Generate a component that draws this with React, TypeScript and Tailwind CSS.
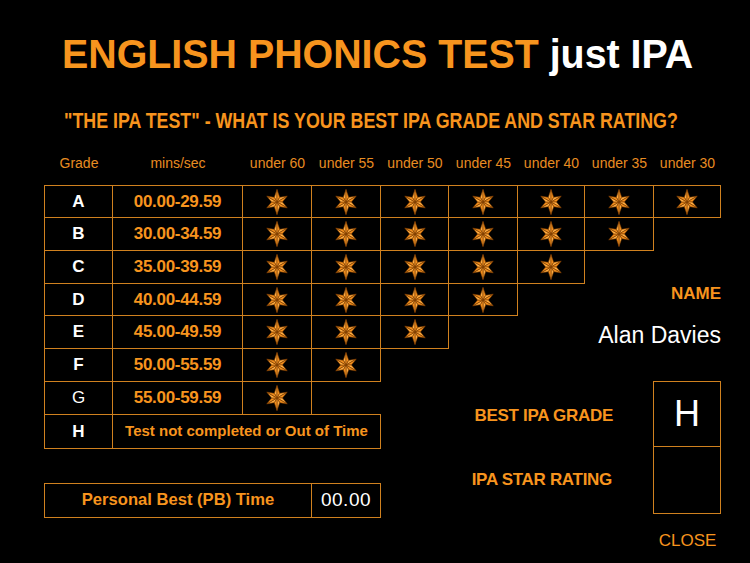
import React from "react";

const ORANGE = "text-[#f7941e]";

function Star() {
  const cx = 13;
  const cy = 13;
  const R = 12.5;
  const r = 5.4;
  const pt = (ang: number, rad: number) => {
    const a = (ang * Math.PI) / 180;
    return [cx + rad * Math.cos(a), cy + rad * Math.sin(a)];
  };
  const tris: React.ReactNode[] = [];
  for (let i = 0; i < 6; i++) {
    const a = -90 + i * 60;
    const P = pt(a, i % 3 === 0 ? R : R - 0.8);
    const L = pt(a - 30, r);
    const Rt = pt(a + 30, r);
    tris.push(
      <polygon
        key={"l" + i}
        points={`${cx},${cy} ${L[0]},${L[1]} ${P[0]},${P[1]}`}
        fill="#ffad42"
        stroke="#7a3a00"
        strokeWidth="0.6"
        strokeLinejoin="round"
      />
    );
    tris.push(
      <polygon
        key={"r" + i}
        points={`${cx},${cy} ${P[0]},${P[1]} ${Rt[0]},${Rt[1]}`}
        fill="#f2901f"
        stroke="#7a3a00"
        strokeWidth="0.6"
        strokeLinejoin="round"
      />
    );
  }
  return (
    <svg width="26" height="26" viewBox="0 0 26 26">
      {tris}
    </svg>
  );
}

const colStart = [
  "col-start-1",
  "col-start-2",
  "col-start-3",
  "col-start-4",
  "col-start-5",
  "col-start-6",
  "col-start-7",
  "col-start-8",
  "col-start-9",
];
const rowStart = [
  "row-start-1",
  "row-start-2",
  "row-start-3",
  "row-start-4",
  "row-start-5",
  "row-start-6",
  "row-start-7",
  "row-start-8",
  "row-start-9",
  "row-start-10",
  "row-start-11",
  "row-start-12",
];

const cell = "-ml-px -mt-px border border-[#d0811f] flex items-center justify-center";

const grades = [
  { g: "A", t: "00.00-29.59", n: 7, bold: true },
  { g: "B", t: "30.00-34.59", n: 6, bold: true },
  { g: "C", t: "35.00-39.59", n: 5, bold: true },
  { g: "D", t: "40.00-44.59", n: 4, bold: true },
  { g: "E", t: "45.00-49.59", n: 3, bold: true },
  { g: "F", t: "50.00-55.59", n: 2, bold: true },
  { g: "G", t: "55.00-59.59", n: 1, bold: false },
];

const headers = ["Grade", "mins/sec", "under 60", "under 55", "under 50", "under 45", "under 40", "under 35", "under 30"];

export default function App() {
  return (
    <div className="w-[750px] h-[563px] bg-black overflow-hidden flex flex-col font-[family-name:'Liberation_Sans',Arial,sans-serif]">
      <div className="mt-[32px] h-[44px] pl-[62px] whitespace-nowrap">
        <span className="inline-block origin-left scale-x-[0.96] text-[41px] leading-[44px] font-bold">
          <span className={ORANGE}>ENGLISH PHONICS TEST</span>
          <span className="text-white"> just IPA</span>
        </span>
      </div>
      <div className="mt-[33px] h-[24px] pl-[64px] whitespace-nowrap">
        <span
          className={`inline-block origin-left scale-x-[0.81] text-[22px] leading-[24px] font-bold ${ORANGE}`}
        >
          "THE IPA TEST" - WHAT IS YOUR BEST IPA GRADE AND STAR RATING?
        </span>
      </div>

      <div className="mt-[20px] ml-[45px] grid grid-cols-[68px_130px_69px_69px_68px_69px_67px_69px_67px] grid-rows-[33px_32px_33px_33px_32px_33px_33px_33px_34px_35px_34px_45px]">
        {headers.map((h, i) => (
          <div
            key={h}
            className={`${colStart[i]} row-start-1 self-start text-center text-[14px] leading-[20px] text-[#e88c22] whitespace-nowrap`}
          >
            {h}
          </div>
        ))}

        {grades.map((row, ri) => (
          <React.Fragment key={row.g}>
            <div
              className={`${cell} col-start-1 ${rowStart[ri + 1]} text-white text-[17px] ${row.bold ? "font-bold" : "font-normal"}`}
            >
              {row.g}
            </div>
            <div className={`${cell} col-start-2 ${rowStart[ri + 1]} ${ORANGE} text-[17px] font-bold tracking-[-0.3px]`}>
              {row.t}
            </div>
            {Array.from({ length: row.n }).map((_, si) => (
              <div key={si} className={`${cell} ${colStart[si + 2]} ${rowStart[ri + 1]}`}>
                <Star />
              </div>
            ))}
          </React.Fragment>
        ))}

        <div className={`${cell} col-start-1 row-start-9 text-white text-[17px] font-bold`}>H</div>
        <div className={`${cell} col-start-2 col-end-5 row-start-9 ${ORANGE} text-[15px] font-bold`}>
          Test not completed or Out of Time
        </div>

        <div className={`${cell} col-start-1 col-end-4 row-start-11 ${ORANGE} text-[16.6px] font-bold`}>
          Personal Best (PB) Time
        </div>
        <div className={`${cell} col-start-4 row-start-11 text-white text-[19px] tracking-[0.5px]`}>00.00</div>

        <div className="col-start-7 col-end-10 row-start-5 row-end-8 flex flex-col items-end">
          <div className={`text-[17px] leading-[20px] font-bold ${ORANGE}`}>NAME</div>
          <div className="mt-[18px] text-[23px] leading-[27px] text-white whitespace-nowrap">Alan Davies</div>
        </div>

        <div
          className={`col-start-5 col-end-9 row-start-8 row-end-10 flex items-center justify-end pr-[41px] text-[17px] font-bold tracking-[-0.3px] whitespace-nowrap ${ORANGE}`}
        >
          BEST IPA GRADE
        </div>
        <div
          className={`col-start-5 col-end-9 row-start-10 row-end-12 flex items-center justify-end pr-[42px] pb-[7px] text-[17px] font-bold tracking-[-0.3px] whitespace-nowrap ${ORANGE}`}
        >
          IPA STAR RATING
        </div>

        <div className="col-start-9 row-start-8 row-end-12 -ml-px -mt-px flex flex-col">
          <div className="h-[66px] border border-[#d0811f] flex items-center justify-center text-white text-[36px] leading-none">
            H
          </div>
          <div className="-mt-px h-[68px] border border-[#d0811f]"></div>
        </div>

        <div className={`col-start-9 row-start-12 pt-[13px] text-center text-[17px] leading-[20px] ${ORANGE}`}>CLOSE</div>
      </div>
    </div>
  );
}
